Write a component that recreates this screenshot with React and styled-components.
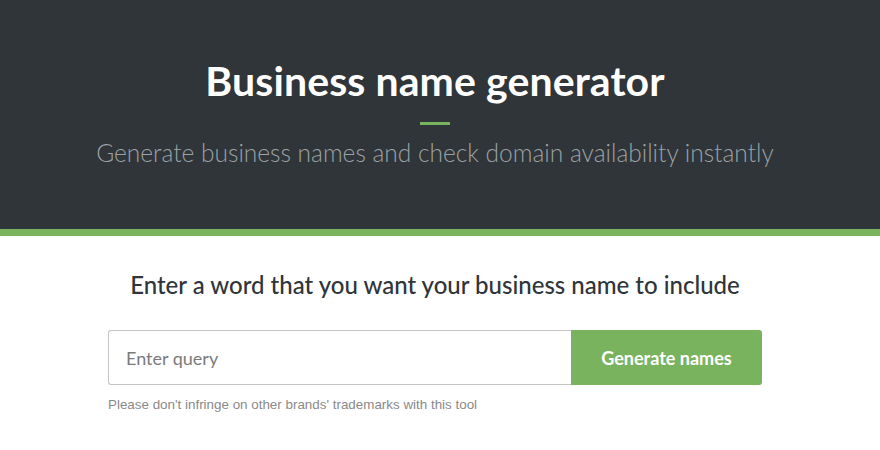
import styled, { createGlobalStyle } from "styled-components"

const Global = createGlobalStyle`
  html, body {
    margin: 0;
    padding: 0;
    background: #ffffff;
    font-family: Lato, "Open Sans", sans-serif;
  }
`

const Hero = styled.header`
  background: #2f3539;
  border-bottom: 7px solid #79b35e;
  height: 236px;
  box-sizing: border-box;
  padding: 55px 10px 0 0;
  display: flex;
  flex-direction: column;
  align-items: center;
`

const Title = styled.h1`
  margin: 0;
  color: #ffffff;
  font-size: 41px;
  font-weight: 700;
  line-height: 52px;
  letter-spacing: 0.1px;
`

const Rule = styled.div`
  width: 30px;
  height: 3px;
  background: #79b35e;
  margin: 15px 0 12px;
`

const Subtitle = styled.p`
  margin: 0;
  color: #9ca2a5;
  font-size: 24.5px;
  font-weight: 300;
  line-height: 32px;
`

const Main = styled.main`
  padding: 32px 10px 0 0;
  display: flex;
  flex-direction: column;
  align-items: center;
`

const Prompt = styled.h2`
  margin: 0;
  color: #2f3539;
  font-size: 24px;
  font-weight: 500;
  line-height: 34px;
`

const Form = styled.form`
  margin-top: 28px;
  width: 654px;
  display: flex;
  height: 55px;
`

const Input = styled.input`
  flex: 1;
  box-sizing: border-box;
  border: 1px solid #c4c4c4;
  border-right: none;
  border-radius: 3px 0 0 3px;
  padding: 0 17px;
  font-family: Lato, sans-serif;
  font-size: 18px;
  color: #333;
  outline: none;
  &::placeholder {
    color: #7b7b7b;
  }
`

const Button = styled.button`
  width: 191px;
  border: none;
  border-radius: 0 3px 3px 0;
  background: #79b35e;
  color: #ffffff;
  font-family: Lato, sans-serif;
  font-size: 18px;
  font-weight: 700;
  cursor: pointer;
`

const Note = styled.p`
  width: 654px;
  margin: 12px 0 0;
  color: #8a8a8a;
  font-family: "Liberation Sans", Arial, sans-serif;
  font-size: 13.4px;
`

export default function App() {
  return (
    <>
      <Global />
      <Hero>
        <Title>Business name generator</Title>
        <Rule />
        <Subtitle>Generate business names and check domain availability instantly</Subtitle>
      </Hero>
      <Main>
        <Prompt>Enter a word that you want your business name to include</Prompt>
        <Form onSubmit={e => e.preventDefault()}>
          <Input placeholder="Enter query" />
          <Button type="submit">Generate names</Button>
        </Form>
        <Note>Please don't infringe on other brands' trademarks with this tool</Note>
      </Main>
    </>
  )
}
